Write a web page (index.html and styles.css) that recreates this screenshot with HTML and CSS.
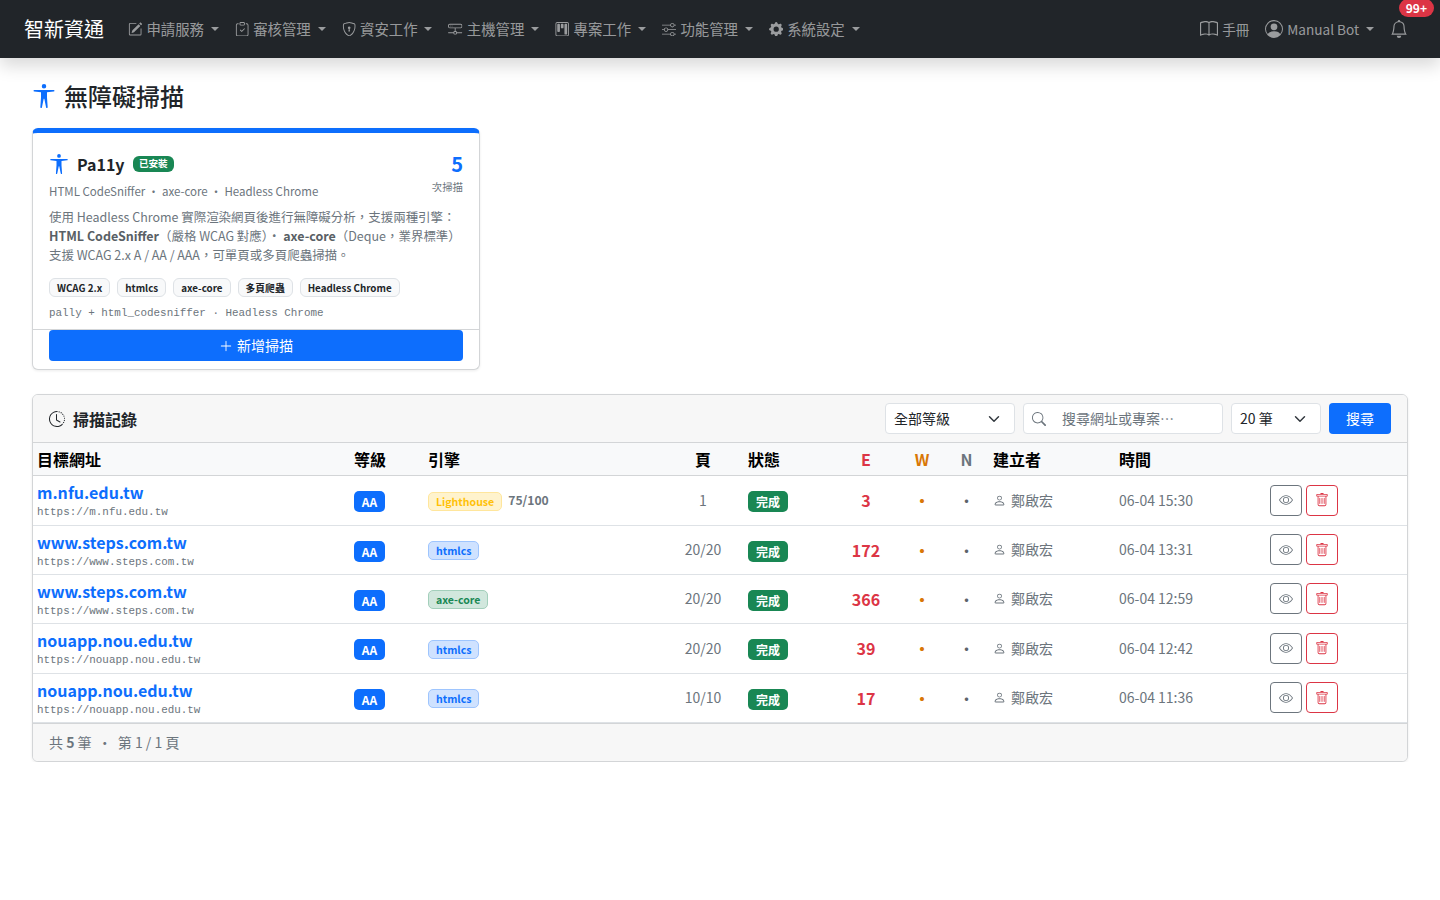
FILE: index.html
```html
<!DOCTYPE html>
<html lang="zh-Hant">
<head>
<meta charset="utf-8">
<title>無障礙掃描</title>
<link rel="stylesheet" href="styles.css">
</head>
<body>
<svg class="defs" aria-hidden="true">
<symbol id="i-pencil" viewBox="0 0 16 16"><path d="M15.502 1.94a.5.5 0 0 1 0 .706L14.459 3.69l-2-2L13.502.646a.5.5 0 0 1 .707 0l1.293 1.293zm-1.75 2.456-2-2L4.939 9.21a.5.5 0 0 0-.121.196l-.805 2.414a.25.25 0 0 0 .316.316l2.414-.805a.5.5 0 0 0 .196-.12l6.813-6.814z"/><path fill-rule="evenodd" d="M1 13.5A1.5 1.5 0 0 0 2.5 15h11a1.5 1.5 0 0 0 1.5-1.5v-6a.5.5 0 0 0-1 0v6a.5.5 0 0 1-.5.5h-11a.5.5 0 0 1-.5-.5v-11a.5.5 0 0 1 .5-.5H9a.5.5 0 0 0 0-1H2.5A1.5 1.5 0 0 0 1 2.5v11z"/></symbol>
<symbol id="i-clip" viewBox="0 0 16 16"><path fill-rule="evenodd" d="M10.854 7.146a.5.5 0 0 1 0 .708l-3 3a.5.5 0 0 1-.708 0l-1.5-1.5a.5.5 0 1 1 .708-.708L7.5 9.793l2.646-2.647a.5.5 0 0 1 .708 0z"/><path d="M4 1.5H3a2 2 0 0 0-2 2V14a2 2 0 0 0 2 2h10a2 2 0 0 0 2-2V3.5a2 2 0 0 0-2-2h-1v1h1a1 1 0 0 1 1 1V14a1 1 0 0 1-1 1H3a1 1 0 0 1-1-1V3.5a1 1 0 0 1 1-1h1v-1z"/><path d="M9.5 1a.5.5 0 0 1 .5.5v1a.5.5 0 0 1-.5.5h-3a.5.5 0 0 1-.5-.5v-1a.5.5 0 0 1 .5-.5h3zm-3-1A1.5 1.5 0 0 0 5 1.5v1A1.5 1.5 0 0 0 6.5 4h3A1.5 1.5 0 0 0 11 2.5v-1A1.5 1.5 0 0 0 9.5 0h-3z"/></symbol>
<symbol id="i-shield" viewBox="0 0 16 16"><path d="M5.338 1.59a61.44 61.44 0 0 0-2.837.856.481.481 0 0 0-.328.39c-.554 4.157.726 7.19 2.253 9.188a10.725 10.725 0 0 0 2.287 2.233c.346.244.652.42.893.533.12.057.218.095.293.118a.55.55 0 0 0 .101.025.615.615 0 0 0 .1-.025c.076-.023.174-.061.294-.118.24-.113.547-.29.893-.533a10.726 10.726 0 0 0 2.287-2.233c1.527-1.997 2.807-5.031 2.253-9.188a.48.48 0 0 0-.328-.39c-.651-.213-1.75-.56-2.837-.855C9.552 1.29 8.531 1.067 8 1.067c-.53 0-1.552.223-2.662.524zM5.072.56C6.157.265 7.31 0 8 0s1.843.265 2.928.56c1.11.3 2.229.655 2.887.87a1.54 1.54 0 0 1 1.044 1.262c.596 4.477-.787 7.795-2.465 9.99a11.775 11.775 0 0 1-2.517 2.453 7.159 7.159 0 0 1-1.048.625c-.28.132-.581.24-.829.24s-.548-.108-.829-.24a7.158 7.158 0 0 1-1.048-.625 11.777 11.777 0 0 1-2.517-2.453C1.928 10.487.545 7.169 1.141 2.692A1.54 1.54 0 0 1 2.185 1.43 62.456 62.456 0 0 1 5.072.56z"/><path d="M9.5 6.5a1.5 1.5 0 0 1-1 1.415l.385 1.99a.5.5 0 0 1-.491.595h-.788a.5.5 0 0 1-.49-.595l.384-1.99a1.5 1.5 0 1 1 2-1.415z"/></symbol>
<symbol id="i-hdd" viewBox="0 0 16 16"><path d="M4.5 5a.5.5 0 1 0 0-1 .5.5 0 0 0 0 1zM3 4.5a.5.5 0 1 1-1 0 .5.5 0 0 1 1 0z"/><path d="M0 4a2 2 0 0 1 2-2h12a2 2 0 0 1 2 2v1a2 2 0 0 1-2 2H8.5v3a1.5 1.5 0 0 1 1.5 1.5h5.5a.5.5 0 0 1 0 1H10A1.5 1.5 0 0 1 8.5 14h-1A1.5 1.5 0 0 1 6 12.5H.5a.5.5 0 0 1 0-1H6A1.5 1.5 0 0 1 7.5 10V7H2a2 2 0 0 1-2-2V4zm1 0v1a1 1 0 0 0 1 1h12a1 1 0 0 0 1-1V4a1 1 0 0 0-1-1H2a1 1 0 0 0-1 1zm6 7.5v1a.5.5 0 0 0 .5.5h1a.5.5 0 0 0 .5-.5v-1a.5.5 0 0 0-.5-.5h-1a.5.5 0 0 0-.5.5z"/></symbol>
<symbol id="i-kanban" viewBox="0 0 16 16"><path d="M13.5 1a1 1 0 0 1 1 1v12a1 1 0 0 1-1 1h-11a1 1 0 0 1-1-1V2a1 1 0 0 1 1-1h11zm-11-1a2 2 0 0 0-2 2v12a2 2 0 0 0 2 2h11a2 2 0 0 0 2-2V2a2 2 0 0 0-2-2h-11z"/><path d="M6.5 3a1 1 0 0 1 1-1h1a1 1 0 0 1 1 1v3a1 1 0 0 1-1 1h-1a1 1 0 0 1-1-1V3zm-4 0a1 1 0 0 1 1-1h1a1 1 0 0 1 1 1v7a1 1 0 0 1-1 1h-1a1 1 0 0 1-1-1V3zm8 0a1 1 0 0 1 1-1h1a1 1 0 0 1 1 1v10a1 1 0 0 1-1 1h-1a1 1 0 0 1-1-1V3z"/></symbol>
<symbol id="i-sliders" viewBox="0 0 16 16"><path fill-rule="evenodd" d="M11.5 2a1.5 1.5 0 1 0 0 3 1.5 1.5 0 0 0 0-3zM9.05 3a2.5 2.5 0 0 1 4.9 0H16v1h-2.05a2.5 2.5 0 0 1-4.9 0H0V3h9.05zM4.5 7a1.5 1.5 0 1 0 0 3 1.5 1.5 0 0 0 0-3zM2.05 8a2.5 2.5 0 0 1 4.9 0H16v1H6.95a2.5 2.5 0 0 1-4.9 0H0V8h2.05zm9.45 4a1.5 1.5 0 1 0 0 3 1.5 1.5 0 0 0 0-3zm-2.45 1a2.5 2.5 0 0 1 4.9 0H16v1h-2.05a2.5 2.5 0 0 1-4.9 0H0v-1h9.05z"/></symbol>
<symbol id="i-gear" viewBox="0 0 16 16"><path d="M9.405 1.05c-.413-1.4-2.397-1.4-2.81 0l-.1.34a1.464 1.464 0 0 1-2.105.872l-.31-.17c-1.283-.698-2.686.705-1.987 1.987l.169.311c.446.82.023 1.841-.872 2.105l-.34.1c-1.4.413-1.4 2.397 0 2.81l.34.1a1.464 1.464 0 0 1 .872 2.105l-.17.31c-.698 1.283.705 2.686 1.987 1.987l.311-.169a1.464 1.464 0 0 1 2.105.872l.1.34c.413 1.4 2.397 1.4 2.81 0l.1-.34a1.464 1.464 0 0 1 2.105-.872l.31.17c1.283.698 2.686-.705 1.987-1.987l-.169-.311a1.464 1.464 0 0 1 .872-2.105l.34-.1c1.4-.413 1.4-2.397 0-2.81l-.34-.1a1.464 1.464 0 0 1-.872-2.105l.17-.31c.698-1.283-.705-2.686-1.987-1.987l-.311.169a1.464 1.464 0 0 1-2.105-.872l-.1-.34zM8 10.93a2.929 2.929 0 1 1 0-5.86 2.929 2.929 0 0 1 0 5.858z"/></symbol>
<symbol id="i-book" viewBox="0 0 16 16"><path d="M1 2.828c.885-.37 2.154-.769 3.388-.893 1.33-.134 2.458.063 3.112.752v9.746c-.935-.53-2.12-.603-3.213-.493-1.18.12-2.37.461-3.287.811V2.828zm7.5-.141c.654-.689 1.782-.886 3.112-.752 1.234.124 2.503.523 3.388.893v9.923c-.918-.35-2.107-.692-3.287-.81-1.094-.111-2.278-.039-3.213.492V2.687zM8 1.783C7.015.936 5.587.81 4.287.94c-1.514.153-3.042.672-3.994 1.105A.5.5 0 0 0 0 2.5v11a.5.5 0 0 0 .707.455c.882-.4 2.303-.881 3.68-1.02 1.409-.142 2.59.087 3.223.877a.5.5 0 0 0 .78 0c.633-.79 1.814-1.019 3.222-.877 1.378.139 2.8.62 3.681 1.02A.5.5 0 0 0 16 13.5v-11a.5.5 0 0 0-.293-.455c-.952-.433-2.48-.952-3.994-1.105C10.413.809 8.985.936 8 1.783z"/></symbol>
<symbol id="i-personc" viewBox="0 0 16 16"><path d="M11 6a3 3 0 1 1-6 0 3 3 0 0 1 6 0z"/><path fill-rule="evenodd" d="M0 8a8 8 0 1 1 16 0A8 8 0 0 1 0 8zm8-7a7 7 0 0 0-5.468 11.37C3.242 11.226 4.805 10 8 10s4.757 1.225 5.468 2.37A7 7 0 0 0 8 1z"/></symbol>
<symbol id="i-bell" viewBox="0 0 16 16"><path d="M8 16a2 2 0 0 0 2-2H6a2 2 0 0 0 2 2zM8 1.918l-.797.161A4.002 4.002 0 0 0 4 6c0 .628-.134 2.197-.459 3.742-.16.767-.376 1.566-.663 2.258h10.244c-.287-.692-.502-1.49-.663-2.258C12.134 8.197 12 6.628 12 6a4.002 4.002 0 0 0-3.203-3.92L8 1.917zM14.22 12c.223.447.481.801.78 1H1c.299-.199.557-.553.78-1C2.68 10.2 3 6.88 3 6c0-2.42 1.72-4.44 4.005-4.901a1 1 0 1 1 1.99 0A5.002 5.002 0 0 1 13 6c0 .88.32 4.2 1.22 6z"/></symbol>
<symbol id="i-access" viewBox="0 0 16 16"><path d="M9.5 1.5a1.5 1.5 0 1 1-3 0 1.5 1.5 0 0 1 3 0ZM6 5.5l-4.535-.442A.531.531 0 0 1 1.531 4H14.47a.531.531 0 0 1 .066 1.058L10 5.5V9l.452 6.42a.535.535 0 0 1-1.053.174L8.243 9.97c-.064-.252-.422-.252-.486 0l-1.156 5.624a.535.535 0 0 1-1.053-.174L6 9V5.5Z"/></symbol>
<symbol id="i-clock" viewBox="0 0 16 16"><path d="M8.515 1.019A7 7 0 0 0 8 1V0a8 8 0 0 1 .589.022l-.074.997zm2.004.45a7.003 7.003 0 0 0-.985-.299l.219-.976c.383.086.76.2 1.126.342l-.36.933zm1.37.71a7.01 7.01 0 0 0-.439-.27l.493-.87a8.025 8.025 0 0 1 .979.654l-.615.789a6.996 6.996 0 0 0-.418-.302zm1.834 1.79a6.99 6.99 0 0 0-.653-.796l.724-.69c.27.285.52.59.747.91l-.818.576zm.744 1.352a7.08 7.08 0 0 0-.214-.468l.893-.45a7.976 7.976 0 0 1 .45 1.088l-.95.313a7.023 7.023 0 0 0-.179-.483zm.53 2.507a6.991 6.991 0 0 0-.1-1.025l.985-.17c.067.386.106.778.116 1.17l-1 .025zm-.131 1.538c.033-.17.06-.339.081-.51l.993.123a7.957 7.957 0 0 1-.23 1.155l-.964-.267c.046-.165.086-.332.12-.501zm-.952 2.379c.184-.29.346-.594.486-.908l.914.405c-.16.36-.345.706-.555 1.038l-.845-.535zm-.964 1.205c.122-.122.239-.248.35-.378l.758.653a8.073 8.073 0 0 1-.401.432l-.707-.707z"/><path d="M8 1a7 7 0 1 0 4.95 11.95l.707.707A8.001 8.001 0 1 1 8 0v1z"/><path d="M7.5 3a.5.5 0 0 1 .5.5v5.21l3.248 1.856a.5.5 0 0 1-.496.868l-3.5-2A.5.5 0 0 1 7 9V3.5a.5.5 0 0 1 .5-.5z"/></symbol>
<symbol id="i-search" viewBox="0 0 16 16"><path d="M11.742 10.344a6.5 6.5 0 1 0-1.397 1.398h-.001c.03.04.062.078.098.115l3.85 3.85a1 1 0 0 0 1.415-1.414l-3.85-3.85a1.007 1.007 0 0 0-.115-.1zM12 6.5a5.5 5.5 0 1 1-11 0 5.5 5.5 0 0 1 11 0z"/></symbol>
<symbol id="i-person" viewBox="0 0 16 16"><path d="M8 8a3 3 0 1 0 0-6 3 3 0 0 0 0 6Zm2-3a2 2 0 1 1-4 0 2 2 0 0 1 4 0Zm4 8c0 1-1 1-1 1H3s-1 0-1-1 1-4 6-4 6 3 6 4Zm-1-.004c-.001-.246-.154-.986-.832-1.664C11.516 10.68 10.289 10 8 10c-2.29 0-3.516.68-4.168 1.332-.678.678-.83 1.418-.832 1.664h10Z"/></symbol>
<symbol id="i-eye" viewBox="0 0 16 16"><path d="M16 8s-3-5.5-8-5.5S0 8 0 8s3 5.5 8 5.5S16 8 16 8zM1.173 8a13.133 13.133 0 0 1 1.66-2.043C4.12 4.668 5.88 3.5 8 3.5c2.12 0 3.879 1.168 5.168 2.457A13.133 13.133 0 0 1 14.828 8c-.058.087-.122.183-.195.288-.335.48-.83 1.12-1.465 1.755C11.879 11.332 10.119 12.5 8 12.5c-2.12 0-3.879-1.168-5.168-2.457A13.134 13.134 0 0 1 1.172 8z"/><path d="M8 5.5a2.5 2.5 0 1 0 0 5 2.5 2.5 0 0 0 0-5zM4.5 8a3.5 3.5 0 1 1 7 0 3.5 3.5 0 0 1-7 0z"/></symbol>
<symbol id="i-trash" viewBox="0 0 16 16"><path d="M5.5 5.5A.5.5 0 0 1 6 6v6a.5.5 0 0 1-1 0V6a.5.5 0 0 1 .5-.5zm2.5 0a.5.5 0 0 1 .5.5v6a.5.5 0 0 1-1 0V6a.5.5 0 0 1 .5-.5zm3 .5a.5.5 0 0 0-1 0v6a.5.5 0 0 0 1 0V6z"/><path fill-rule="evenodd" d="M14.5 3a1 1 0 0 1-1 1H13v9a2 2 0 0 1-2 2H5a2 2 0 0 1-2-2V4h-.5a1 1 0 0 1-1-1V2a1 1 0 0 1 1-1H6a1 1 0 0 1 1-1h2a1 1 0 0 1 1 1h3.5a1 1 0 0 1 1 1v1zM4.118 4 4 4.059V13a1 1 0 0 0 1 1h6a1 1 0 0 0 1-1V4.059L11.882 4H4.118zM2.5 3V2h11v1h-11z"/></symbol>
<symbol id="i-plus" viewBox="0 0 16 16"><path d="M8 2a.5.5 0 0 1 .5.5v5h5a.5.5 0 0 1 0 1h-5v5a.5.5 0 0 1-1 0v-5h-5a.5.5 0 0 1 0-1h5v-5A.5.5 0 0 1 8 2Z"/></symbol>
</svg>

<nav class="navbar">
  <a class="brand">智新資通</a>
  <div class="nav-items">
    <a class="nav-link"><svg class="ico"><use href="#i-pencil"/></svg>申請服務<i class="caret"></i></a>
    <a class="nav-link"><svg class="ico"><use href="#i-clip"/></svg>審核管理<i class="caret"></i></a>
    <a class="nav-link"><svg class="ico"><use href="#i-shield"/></svg>資安工作<i class="caret"></i></a>
    <a class="nav-link"><svg class="ico"><use href="#i-hdd"/></svg>主機管理<i class="caret"></i></a>
    <a class="nav-link"><svg class="ico"><use href="#i-kanban"/></svg>專案工作<i class="caret"></i></a>
    <a class="nav-link"><svg class="ico"><use href="#i-sliders"/></svg>功能管理<i class="caret"></i></a>
    <a class="nav-link"><svg class="ico"><use href="#i-gear"/></svg>系統設定<i class="caret"></i></a>
  </div>
  <div class="nav-right">
    <a class="nav-link nav-link-sm"><svg class="ico ico-book"><use href="#i-book"/></svg>手冊</a>
    <a class="nav-link nav-link-sm"><svg class="ico ico-user"><use href="#i-personc"/></svg>Manual Bot<i class="caret"></i></a>
    <a class="bell"><svg class="ico-bell"><use href="#i-bell"/></svg><span class="bell-badge">99+</span></a>
  </div>
</nav>

<main class="page">
  <h1 class="page-title"><svg class="title-ico"><use href="#i-access"/></svg>無障礙掃描</h1>

  <section class="tool-card">
    <div class="tool-body">
      <div class="tool-head">
        <div class="tool-info">
          <div class="tool-name"><svg class="tool-ico"><use href="#i-access"/></svg><span class="tool-title">Pa11y</span><span class="installed">已安裝</span></div>
          <div class="tool-sub">HTML CodeSniffer ・ axe-core ・ Headless Chrome</div>
        </div>
        <div class="tool-stat"><div class="stat-num">5</div><div class="stat-label">次掃描</div></div>
      </div>
      <p class="tool-desc">使用 Headless Chrome 實際渲染網頁後進行無障礙分析，支援兩種引擎：<br><b>HTML CodeSniffer</b>（嚴格 WCAG 對應）・ <b>axe-core</b>（Deque，業界標準）<br>支援 WCAG 2.x A / AA / AAA，可單頁或多頁爬蟲掃描。</p>
      <div class="tags"><span class="tag">WCAG 2.x</span><span class="tag">htmlcs</span><span class="tag">axe-core</span><span class="tag">多頁爬蟲</span><span class="tag">Headless Chrome</span></div>
      <div class="tool-cmd">pally + html_codesniffer · Headless Chrome</div>
    </div>
    <div class="tool-foot"><button class="btn-new"><svg class="ico-plus"><use href="#i-plus"/></svg>新增掃描</button></div>
  </section>

  <section class="log-card">
    <header class="log-head">
      <h2 class="log-title"><svg class="clock"><use href="#i-clock"/></svg>掃描記錄</h2>
      <form class="filters">
        <select class="sel sel-level"><option>全部等級</option></select>
        <div class="search"><svg class="search-ico"><use href="#i-search"/></svg><input class="search-input" placeholder="搜尋網址或專案⋯"></div>
        <select class="sel sel-size"><option>20 筆</option></select>
        <button class="btn-search" type="button">搜尋</button>
      </form>
    </header>
    <table class="log-table">
      <colgroup><col class="c-url"><col class="c-level"><col class="c-engine"><col class="c-page"><col class="c-status"><col class="c-e"><col class="c-w"><col class="c-n"><col class="c-user"><col class="c-time"><col class="c-act"></colgroup>
      <thead>
        <tr><th>目標網址</th><th>等級</th><th>引擎</th><th class="ctr">頁</th><th class="st">狀態</th><th class="ctr th-e">E</th><th class="ctr th-w">W</th><th class="ctr th-n">N</th><th>建立者</th><th>時間</th><th></th></tr>
      </thead>
      <tbody>
        <tr class="r50"><td class="td-url"><a class="url">m.nfu.edu.tw</a><div class="full">https://m.nfu.edu.tw</div></td><td><span class="lvl">AA</span></td><td><span class="eng eng-lh">Lighthouse</span><span class="score">75/100</span></td><td class="ctr">1</td><td class="st"><span class="done">完成</span></td><td class="ctr num-e">3</td><td class="ctr dot-w">•</td><td class="ctr dot-n">•</td><td class="user"><svg class="ico-person"><use href="#i-person"/></svg>鄭啟宏</td><td>06-04 15:30</td><td><div class="acts"><button class="act act-view"><svg class="ico-act"><use href="#i-eye"/></svg></button><button class="act act-del"><svg class="ico-act"><use href="#i-trash"/></svg></button></div></td></tr>
        <tr><td class="td-url"><a class="url">www.steps.com.tw</a><div class="full">https://www.steps.com.tw</div></td><td><span class="lvl">AA</span></td><td><span class="eng eng-html">htmlcs</span></td><td class="ctr">20/20</td><td class="st"><span class="done">完成</span></td><td class="ctr num-e">172</td><td class="ctr dot-w">•</td><td class="ctr dot-n">•</td><td class="user"><svg class="ico-person"><use href="#i-person"/></svg>鄭啟宏</td><td>06-04 13:31</td><td><div class="acts"><button class="act act-view"><svg class="ico-act"><use href="#i-eye"/></svg></button><button class="act act-del"><svg class="ico-act"><use href="#i-trash"/></svg></button></div></td></tr>
        <tr><td class="td-url"><a class="url">www.steps.com.tw</a><div class="full">https://www.steps.com.tw</div></td><td><span class="lvl">AA</span></td><td><span class="eng eng-axe">axe-core</span></td><td class="ctr">20/20</td><td class="st"><span class="done">完成</span></td><td class="ctr num-e">366</td><td class="ctr dot-w">•</td><td class="ctr dot-n">•</td><td class="user"><svg class="ico-person"><use href="#i-person"/></svg>鄭啟宏</td><td>06-04 12:59</td><td><div class="acts"><button class="act act-view"><svg class="ico-act"><use href="#i-eye"/></svg></button><button class="act act-del"><svg class="ico-act"><use href="#i-trash"/></svg></button></div></td></tr>
        <tr class="r50"><td class="td-url"><a class="url">nouapp.nou.edu.tw</a><div class="full">https://nouapp.nou.edu.tw</div></td><td><span class="lvl">AA</span></td><td><span class="eng eng-html">htmlcs</span></td><td class="ctr">20/20</td><td class="st"><span class="done">完成</span></td><td class="ctr num-e">39</td><td class="ctr dot-w">•</td><td class="ctr dot-n">•</td><td class="user"><svg class="ico-person"><use href="#i-person"/></svg>鄭啟宏</td><td>06-04 12:42</td><td><div class="acts"><button class="act act-view"><svg class="ico-act"><use href="#i-eye"/></svg></button><button class="act act-del"><svg class="ico-act"><use href="#i-trash"/></svg></button></div></td></tr>
        <tr><td class="td-url"><a class="url">nouapp.nou.edu.tw</a><div class="full">https://nouapp.nou.edu.tw</div></td><td><span class="lvl">AA</span></td><td><span class="eng eng-html">htmlcs</span></td><td class="ctr">10/10</td><td class="st"><span class="done">完成</span></td><td class="ctr num-e">17</td><td class="ctr dot-w">•</td><td class="ctr dot-n">•</td><td class="user"><svg class="ico-person"><use href="#i-person"/></svg>鄭啟宏</td><td>06-04 11:36</td><td><div class="acts"><button class="act act-view"><svg class="ico-act"><use href="#i-eye"/></svg></button><button class="act act-del"><svg class="ico-act"><use href="#i-trash"/></svg></button></div></td></tr>
      </tbody>
    </table>
    <footer class="log-foot">共 <b>5</b> 筆 <span class="foot-sep">・</span> 第 1 / 1 頁</footer>
  </section>
</main>
</body>
</html>
```

FILE: styles.css
```css
* { box-sizing: border-box; }
html, body { margin: 0; padding: 0; }
body {
  font-family: "Noto Sans CJK TC", "Noto Sans", sans-serif;
  font-size: 14px;
  line-height: 1.4;
  color: #212529;
  background: #fff;
}
.defs { display: none; }
svg { fill: currentColor; flex: none; }

/* navbar */
.navbar {
  display: flex;
  align-items: center;
  height: 58px;
  padding: 0 32px 0 24px;
  background: #212529;
  box-shadow: 0 8px 16px rgba(0, 0, 0, .15);
  position: relative;
}
.brand { color: #fff; font-size: 20px; line-height: 28px; margin-right: 16px; }
.nav-items { display: flex; align-items: center; }
.nav-link {
  display: flex;
  align-items: center;
  padding: 0 8px;
  color: rgba(255, 255, 255, .55);
  font-size: 14.4px;
  line-height: 20px;
}
.nav-link-sm { font-size: 13.6px; }
.ico { width: 14.4px; height: 14.4px; margin-right: 4px; }
.ico-book, .ico-user { width: 18px; height: 18px; margin-right: 4px; }
.caret {
  display: block;
  margin-left: 6.83px;
  border-top: 4.3px solid currentColor;
  border-left: 4.3px solid transparent;
  border-right: 4.3px solid transparent;
}
.nav-right { display: flex; align-items: center; margin-left: auto; }
.bell { position: relative; display: flex; margin-left: 8px; color: rgba(255, 255, 255, .55); }
.ico-bell { width: 18px; height: 18px; }
.bell-badge {
  position: absolute;
  right: -26px;
  top: -21px;
  padding: 0 7px;
  height: 18px;
  line-height: 17px;
  border-radius: 9px;
  background: #dc3545;
  color: #fff;
  font-size: 12px;
  font-weight: 700;
}

/* page */
.page { padding: 21px 32px 0; }
.page-title {
  display: flex;
  align-items: center;
  margin: 0 0 15px;
  font-size: 24px;
  line-height: 34px;
  font-weight: 500;
  color: #212529;
}
.title-ico { width: 24px; height: 26px; margin-right: 8px; color: #0d6efd; }

/* tool card */
.tool-card {
  width: 448px;
  border: 1px solid #d3d5d7;
  border-top: 5px solid #0d6efd;
  border-radius: 6px;
  box-shadow: 0 1px 3px rgba(0, 0, 0, .08);
  background: #fff;
}
.tool-body { padding: 17px 16px 7px; }
.tool-head { display: flex; justify-content: space-between; align-items: flex-start; }
.tool-name { display: flex; align-items: center; height: 28px; }
.tool-ico { width: 20px; height: 20px; margin-right: 8px; color: #0d6efd; }
.tool-title { font-size: 16px; font-weight: 700; margin-right: 8px; }
.installed {
  padding: 0 6.4px;
  height: 16px;
  line-height: 15px;
  border-radius: 6px;
  background: #198754;
  color: #fff;
  font-size: 9.6px;
  font-weight: 700;
}
.tool-sub { margin-top: 4px; font-size: 11.52px; line-height: 18px; color: #6c757d; white-space: nowrap; }
.tool-stat { text-align: right; }
.stat-num { font-size: 20px; font-weight: 700; line-height: 28px; color: #0d6efd; }
.stat-label { margin-top: 1px; font-size: 10.4px; line-height: 16px; color: #6c757d; }
.tool-desc { margin: 8px 0 0; font-size: 12.48px; line-height: 19px; color: #6c757d; white-space: nowrap; }
.tool-desc b { font-weight: 700; color: #595f65; }
.tags { display: flex; gap: 7px; margin-top: 13px; }
.tag {
  padding: 0 7px;
  height: 19px;
  line-height: 18px;
  border: 1px solid #dee2e6;
  border-radius: 6px;
  background: #f8f9fa;
  font-size: 9.8px;
  font-weight: 700;
  color: #212529;
  white-space: nowrap;
}
.tool-cmd { margin-top: 7px; font-family: "Liberation Mono", monospace; font-size: 10.9px; line-height: 18px; color: #6c757d; white-space: nowrap; }
.tool-foot { border-top: 1px solid #d3d5d7; padding: 0 16px 8px; }
.btn-new {
  display: flex;
  align-items: center;
  justify-content: center;
  width: 100%;
  height: 31px;
  border: 0;
  border-radius: 4px;
  background: #0d6efd;
  color: #fff;
  font: inherit;
  font-size: 14px;
}
.ico-plus { width: 14px; height: 14px; margin-right: 4px; }

/* log card */
.log-card {
  margin-top: 24px;
  border: 1px solid #d3d5d7;
  border-radius: 6px;
  box-shadow: 0 1px 3px rgba(0, 0, 0, .08);
  overflow: hidden;
  background: #fff;
}
.log-head {
  display: flex;
  align-items: center;
  justify-content: space-between;
  height: 48px;
  padding: 0 16px;
  background: #f7f7f7;
  border-bottom: 1px solid #d3d5d7;
}
.log-title { display: flex; align-items: center; margin: 0; font-size: 16px; line-height: 24px; font-weight: 700; }
.clock { width: 16px; height: 16px; margin-right: 8px; }
.filters { display: flex; gap: 8px; }
.sel {
  height: 31px;
  padding: 0 8px;
  border: 1px solid #dee2e6;
  border-radius: 4px;
  appearance: none;
  font: inherit;
  color: #212529;
  background: #fff url("data:image/svg+xml,%3csvg xmlns='http://www.w3.org/2000/svg' viewBox='0 0 16 16'%3e%3cpath fill='none' stroke='%23343a40' stroke-linecap='round' stroke-linejoin='round' stroke-width='2' d='m2 5 6 6 6-6'/%3e%3c/svg%3e") no-repeat right 14px center / 12px 12px;
}
.sel-level { width: 130px; }
.sel-size { width: 90px; }
.search {
  display: flex;
  align-items: center;
  width: 200px;
  height: 31px;
  padding: 0 8px;
  border: 1px solid #dee2e6;
  border-radius: 4px;
  background: #fff;
}
.search-ico { width: 14px; height: 14px; color: #6c757d; }
.search-input { flex: 1; min-width: 0; margin-left: 16px; border: 0; outline: 0; padding: 0; font: inherit; background: transparent; }
.search-input::placeholder { color: #6c757d; opacity: 1; }
.btn-search {
  width: 62px;
  height: 31px;
  border: 0;
  border-radius: 4px;
  background: #0d6efd;
  color: #fff;
  font: inherit;
}

/* table */
.log-table { width: 100%; border-collapse: collapse; table-layout: fixed; }
.c-url { width: 317px; }
.c-level { width: 74px; }
.c-engine { width: 239px; }
.c-page { width: 80px; }
.c-status { width: 89px; }
.c-e { width: 68px; }
.c-w { width: 44px; }
.c-n { width: 45px; }
.c-user { width: 126px; }
.c-time { width: 151px; }
.log-table th {
  height: 32px;
  padding: 0 4px;
  background: #f8f9fa;
  border-bottom: 1px solid #d3d5d7;
  font-size: 16px;
  font-weight: 700;
  text-align: left;
  color: #000;
}
.log-table th.st, .log-table td.st { padding-left: 5px; }
.log-table th.th-e { color: #dc3545; }
.log-table th.th-w { color: #d97706; }
.log-table th.th-n { color: #6c757d; }
.log-table th.ctr, .log-table td.ctr { text-align: center; }
.log-table td {
  height: 49px;
  padding: 1px 4px 0;
  border-bottom: 1px solid #dee2e6;
  color: #6c757d;
  vertical-align: middle;
}
.log-table td.td-url { padding-top: 0; }
.log-table tr.r50 td { height: 50px; }
.url { display: block; color: #0d6efd; font-size: 16px; font-weight: 700; line-height: 22px; }
.full { margin-top: 2px; font-family: "Liberation Mono", monospace; font-size: 10.9px; line-height: 14px; color: #6c757d; }
.lvl, .done {
  display: inline-block;
  height: 21px;
  margin-top: 2px;
  line-height: 21px;
  border-radius: 5px;
  color: #fff;
  font-size: 12px;
  font-weight: 700;
  text-align: center;
  vertical-align: middle;
}
.lvl { width: 31px; background: #0d6efd; }
.done { width: 40px; background: #198754; }
.eng {
  display: inline-block;
  height: 19px;
  margin-top: -1px;
  padding: 0 7px;
  line-height: 17px;
  border: 1px solid;
  border-radius: 5px;
  font-size: 10.56px;
  font-weight: 700;
  vertical-align: middle;
}
.eng-lh { background: #fff3cd; border-color: #ffe69c; color: #ffc107; }
.eng-html { background: #cfe2ff; border-color: #9ec5fe; color: #0d6efd; }
.eng-axe { background: #d1e7dd; border-color: #a3cfbb; color: #198754; }
.score { margin-left: 6px; font-size: 12.16px; font-weight: 700; color: #6c757d; }
.log-table td.num-e { font-size: 16px; font-weight: 700; color: #dc3545; }
.log-table td.dot-w { color: #d97706; font-size: 16px; font-weight: 700; }
.log-table td.dot-n { color: #5c636a; font-size: 16px; }
.user { white-space: nowrap; }
.ico-person { width: 13px; height: 13px; margin-right: 5px; vertical-align: -1px; }
.acts { display: flex; gap: 4px; margin-top: -1px; }
.act {
  display: flex;
  align-items: center;
  justify-content: center;
  width: 32px;
  height: 31px;
  padding: 0;
  background: #fff;
  border: 1px solid;
  border-radius: 4px;
}
.act-view { border-color: #6c757d; color: #6c757d; }
.act-del { border-color: #dc3545; color: #dc3545; }
.ico-act { width: 14px; height: 14px; }
.log-foot {
  height: 38px;
  padding: 0 16px;
  line-height: 37px;
  background: #f7f7f7;
  border-top: 1px solid #d3d5d7;
  color: #6c757d;
  font-size: 14px;
}
.log-foot b { font-weight: 700; }
.foot-sep { margin: 0 3px; }
```
